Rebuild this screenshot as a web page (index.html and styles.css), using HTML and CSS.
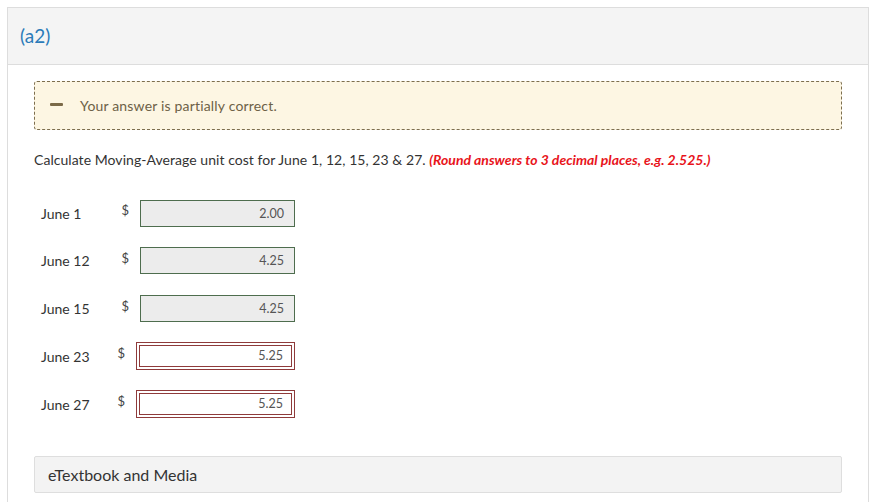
FILE: index.html
```html
<!DOCTYPE html>
<html>
<head>
<meta charset="utf-8">
<link rel="stylesheet" href="styles.css">
</head>
<body>
<div class="panel">
  <div class="panel-head">(a2)</div>
  <div class="panel-body">
    <div class="notice">
      <span class="minus"></span>
      <span class="notice-text">Your answer is partially correct.</span>
    </div>
    <p class="instr">Calculate Moving-Average unit cost for June 1, 12, 15, 23 &amp; 27. <em class="hint">(Round answers to 3 decimal places, e.g. 2.525.)</em></p>
    <div class="rows">
      <div class="row"><span class="lbl">June 1</span><span class="fld"><span class="cur">$</span><span class="inp ok">2.00</span></span></div>
      <div class="row"><span class="lbl">June 12</span><span class="fld"><span class="cur">$</span><span class="inp ok">4.25</span></span></div>
      <div class="row"><span class="lbl">June 15</span><span class="fld"><span class="cur">$</span><span class="inp ok">4.25</span></span></div>
      <div class="row"><span class="lbl">June 23</span><span class="fld"><span class="cur">$</span><span class="inp bad">5.25</span></span></div>
      <div class="row"><span class="lbl">June 27</span><span class="fld"><span class="cur">$</span><span class="inp bad">5.25</span></span></div>
    </div>
    <div class="media">eTextbook and Media</div>
  </div>
</div>
</body>
</html>
```

FILE: styles.css
```css
html, body {
  margin: 0;
  padding: 0;
  background: #ffffff;
  font-family: Lato, "Liberation Sans", sans-serif;
  color: #333333;
}
.panel {
  margin: 7px 5px 0 7px;
  border: 1px solid #dddddd;
  border-bottom: none;
  height: 495px;
  box-sizing: border-box;
}
.panel-head {
  background: #f4f4f4;
  border-bottom: 1px solid #dddddd;
  height: 57px;
  box-sizing: border-box;
  padding: 17px 0 0 12px;
  font-size: 19px;
  line-height: 22px;
  color: #2b7bb9;
}
.panel-body {
  padding: 16px 26px 0 26px;
}
.notice {
  height: 49px;
  box-sizing: border-box;
  border: 1px dashed #7d6e4e;
  border-radius: 3px;
  background: #fdf6e3;
  display: flex;
  align-items: center;
  padding-left: 15px;
}
.minus {
  display: inline-block;
  width: 13px;
  height: 3px;
  border-radius: 1px;
  background: #7b6a48;
  margin-right: 17px;
  margin-top: -3px;
}
.notice-text {
  font-size: 14px;
  color: #6d6147;
  letter-spacing: 0.18px;
}
.instr {
  margin: 21px 0 0 0;
  font-size: 14px;
  line-height: 18px;
  color: #333333;
  letter-spacing: 0.05px;
}
.hint {
  color: #e8141b;
  font-weight: bold;
  font-style: italic;
  letter-spacing: 0;
}
.rows {
  margin-top: 30px;
  display: flex;
  flex-direction: column;
  gap: 19.75px;
}
.row {
  display: flex;
  align-items: center;
  height: 28px;
  padding-left: 7px;
}
.lbl {
  width: 70px;
  font-size: 14px;
  color: #333333;
}
.fld {
  width: 184px;
  display: flex;
  justify-content: flex-end;
  align-items: center;
}
.cur {
  font-size: 13px;
  color: #444444;
  margin-right: 11px;
  margin-top: -6px;
}
.inp {
  box-sizing: border-box;
  height: 27px;
  font-size: 12.5px;
  color: #555555;
  text-align: right;
  padding-right: 10px;
  line-height: 25px;
}
.inp.ok {
  width: 155px;
  background: #ececec;
  border: 1px solid #4e6d4e;
}
.inp.bad {
  width: 159px;
  height: 28px;
  background: #ffffff;
  border: 4px double #8f3b3b;
  line-height: 20px;
  padding-right: 8px;
}
.media {
  margin-top: 38px;
  height: 37px;
  box-sizing: border-box;
  background: #f3f3f3;
  border: 1px solid #dedede;
  border-radius: 2px;
  padding-left: 13px;
  font-size: 16px;
  line-height: 35px;
  color: #333333;
}
```
